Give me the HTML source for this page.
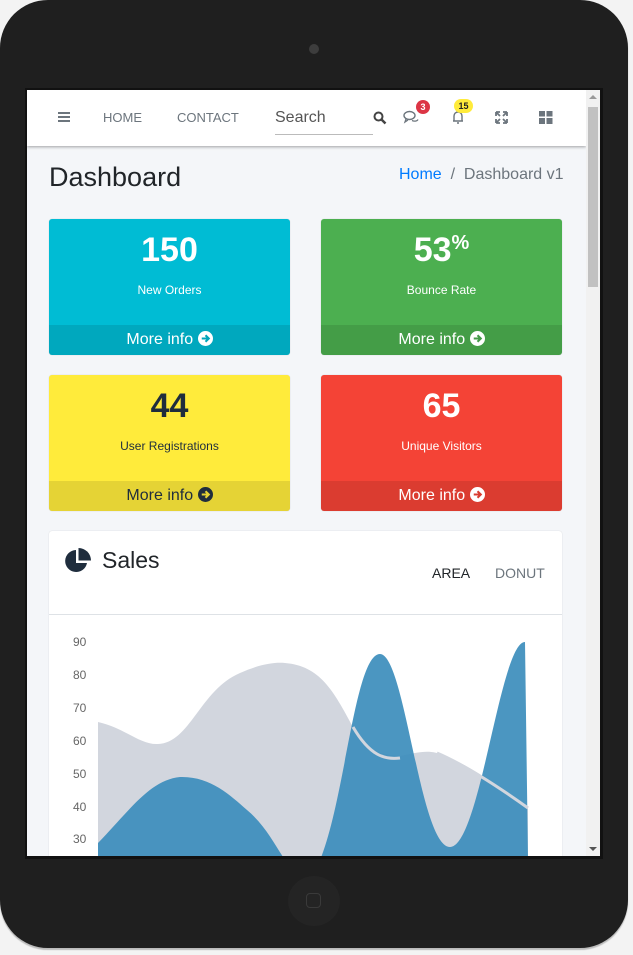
<!DOCTYPE html>
<html><head><meta charset="utf-8"><style>
*{margin:0;padding:0;box-sizing:border-box}
body{width:633px;height:955px;background:#f3f3f3;font-family:"Liberation Sans",Arial,sans-serif;position:relative;overflow:hidden}
.dev{position:absolute;left:0;top:0;width:628px;height:948px;background:#1f1f1f;border-radius:48px;box-shadow:0 2px 1px #bbb}
.cam{position:absolute;left:309px;top:44px;width:10px;height:10px;border-radius:50%;background:#3d3d3d}
.home{position:absolute;left:288px;top:876px;width:52px;height:50px;border-radius:50%;background:#242424}
.home i{position:absolute;left:18px;top:17px;width:15px;height:15px;border:1px solid #3a3a3a;border-radius:4px}
.scr{position:absolute;left:25px;top:88px;width:578px;height:771px;background:#111;padding:2px}
.in{position:relative;width:573px;height:766px;background:#f4f6f9;overflow:hidden}
.sb{position:absolute;right:0;top:0;width:14px;height:766px;background:#f1f1f1}
.th{position:absolute;left:2px;top:17px;width:10px;height:180px;background:#c1c1c1}
.nav{position:absolute;left:0;top:0;width:559px;height:56px;background:#fff;box-shadow:0 1px 3px rgba(0,0,0,.35)}
.t{position:absolute;color:#6c757d;font-size:14px}
.badge{position:absolute;font-size:9px;font-weight:bold;border-radius:8px;text-align:center;line-height:14px;height:14px}
.box{position:absolute;width:241px;height:136px;border-radius:3px;box-shadow:0 0 1px rgba(0,0,0,.2);overflow:hidden;text-align:center;color:#fff}
.box h3{font-size:34px;font-weight:bold;margin-top:12px;height:40px}
.box p{font-size:12px;margin-top:12px}
.box .f{position:absolute;left:0;bottom:0;width:100%;height:30px;background:rgba(0,0,0,.1);font-size:16px;line-height:30px}
.box .f svg{vertical-align:-2px}
.card{position:absolute;left:22px;top:441px;width:513px;height:340px;background:#fff;border-radius:3px;box-shadow:0 0 1px rgba(0,0,0,.2)}
.yl{position:absolute;left:24px;font-size:12px;color:#666}
</style></head><body>
<div class="dev"><div class="cam"></div><div class="home"><i></i></div></div>
<div class="scr"><div class="in">
<div class="nav">
 <div style="position:absolute;left:31px;top:22px;width:12px;height:2px;background:#6c757d;box-shadow:0 4px 0 #6c757d,0 8px 0 #6c757d"></div>
 <div class="t" style="left:76px;top:20px;font-size:13px">HOME</div>
 <div class="t" style="left:150px;top:20px;font-size:13px">CONTACT</div>
 <div class="t" style="left:248px;top:19px;font-size:16px;color:#555">Search</div>
 <div style="position:absolute;left:248px;top:44px;width:98px;height:1px;background:#bbb"></div>
 <svg style="position:absolute;left:346px;top:21px" width="14" height="14" viewBox="0 0 14 14"><circle cx="5.5" cy="5.5" r="4" fill="none" stroke="#444" stroke-width="2"/><path d="M8.5 8.5L12.5 12.5" stroke="#444" stroke-width="2.5"/></svg>
 <svg style="position:absolute;left:376px;top:20px" width="16" height="14" viewBox="0 0 16 14"><ellipse cx="6.5" cy="5.5" rx="5.5" ry="4" fill="none" stroke="#6c757d" stroke-width="1.4"/><path d="M9 10.5c2 1 5 1 6-1M3 9l-1 3 3-2" fill="none" stroke="#6c757d" stroke-width="1.3"/></svg>
 <div class="badge" style="left:389px;top:10px;width:14px;background:#dc3545;color:#fff">3</div>
 <svg style="position:absolute;left:424px;top:19px" width="14" height="16" viewBox="0 0 14 16"><path d="M2 12h10M3 12V7a4 4 0 0 1 8 0v5M6 14h2" fill="none" stroke="#6c757d" stroke-width="1.4"/></svg>
 <div class="badge" style="left:427px;top:9px;width:19px;background:#ffeb3b;color:#222">15</div>
 <svg style="position:absolute;left:468px;top:21px" width="13" height="13" viewBox="0 0 13 13"><path d="M1 1l4 4M12 1l-4 4M1 12l4-4M12 12l-4-4M1 1h4M1 1v4M12 1h-4M12 1v4M1 12h4M1 12v-4M12 12h-4M12 12v-4" stroke="#6c757d" stroke-width="1.8" fill="none"/></svg>
 <svg style="position:absolute;left:512px;top:21px" width="14" height="13" viewBox="0 0 14 13"><rect x="0" y="0" width="6" height="5.5" fill="#6c757d"/><rect x="7.5" y="0" width="6" height="5.5" fill="#6c757d"/><rect x="0" y="7" width="6" height="6" fill="#6c757d"/><rect x="7.5" y="7" width="6" height="6" fill="#6c757d"/></svg>
</div>
<div style="position:absolute;left:22px;top:72px;font-size:27px;color:#212529">Dashboard</div>
<div style="position:absolute;left:372px;top:76px;font-size:16px;color:#6c757d"><span style="color:#007bff">Home</span> &nbsp;/&nbsp; Dashboard v1</div>

<div class="box" style="left:22px;top:129px;background:#00bcd4"><h3>150</h3><p>New Orders</p><div class="f">More info <svg width="15" height="15" viewBox="0 0 16 16"><circle cx="8" cy="8" r="8" fill="#fff"/><path d="M4 8h7M8 4.5L11.5 8 8 11.5" stroke="#00a5ba" stroke-width="2.2" fill="none"/></svg></div></div>
<div class="box" style="left:294px;top:129px;background:#4caf50"><h3>53<sup style="font-size:20px;vertical-align:12px">%</sup></h3><p>Bounce Rate</p><div class="f">More info <svg width="15" height="15" viewBox="0 0 16 16"><circle cx="8" cy="8" r="8" fill="#fff"/><path d="M4 8h7M8 4.5L11.5 8 8 11.5" stroke="#449b48" stroke-width="2.2" fill="none"/></svg></div></div>
<div class="box" style="left:22px;top:285px;background:#ffeb3b;color:#1f2d3d"><h3>44</h3><p>User Registrations</p><div class="f">More info <svg width="15" height="15" viewBox="0 0 16 16"><circle cx="8" cy="8" r="8" fill="#1f2d3d"/><path d="M4 8h7M8 4.5L11.5 8 8 11.5" stroke="#e5d335" stroke-width="2.2" fill="none"/></svg></div></div>
<div class="box" style="left:294px;top:285px;background:#f44336"><h3>65</h3><p>Unique Visitors</p><div class="f">More info <svg width="15" height="15" viewBox="0 0 16 16"><circle cx="8" cy="8" r="8" fill="#fff"/><path d="M4 8h7M8 4.5L11.5 8 8 11.5" stroke="#d93c30" stroke-width="2.2" fill="none"/></svg></div></div>

<div class="card">
 <svg style="position:absolute;left:16px;top:17px" width="26" height="26" viewBox="0 0 26 26"><path d="M11 2a11 11 0 1 0 11 13H11z" fill="#1f2d3d"/><path d="M13.5 0v12.5H26A12.5 12.5 0 0 0 13.5 0z" fill="#1f2d3d"/></svg>
 <div style="position:absolute;left:53px;top:16px;font-size:23px;color:#212529">Sales</div>
 <div style="position:absolute;left:383px;top:34px;font-size:14px;color:#212529">AREA</div>
 <div style="position:absolute;left:446px;top:34px;font-size:14px;color:#6c757d">DONUT</div>
 <div style="position:absolute;left:0;top:83px;width:100%;height:1px;background:#dee2e6"></div>
 <div class="yl" style="top:104px">90</div><div class="yl" style="top:137px">80</div><div class="yl" style="top:170px">70</div><div class="yl" style="top:203px">60</div><div class="yl" style="top:236px">50</div><div class="yl" style="top:269px">40</div><div class="yl" style="top:301px">30</div>
</div>
<svg style="position:absolute;left:0;top:0" width="559" height="766" viewBox="27 90 559 766">
 <path d="M98 722C125 728 140 745 158 744C190 743 200 690 240 673C260 664 275 662 285 663C320 666 333 690 353 727C370 756 385 754 400 756C420 752 430 749 445 756C480 770 500 790 528 808V860H98Z" fill="#d2d6de"/>
 <path d="M98 843C130 810 150 780 180 777C210 776 230 795 247 810C265 825 275 845 285 860L320 860C345 800 355 654 380 654C405 654 420 847 450 847C480 847 500 642 525 642L528 860H98Z" fill="#3c8dbc" fill-opacity=".92"/>
 <path d="M353 727C370 756 385 760 400 758M437 753C465 765 500 788 528 808" fill="none" stroke="#d2d6de" stroke-width="3"/>
</svg>
<div class="sb"><div class="th"></div>
 <div style="position:absolute;left:3px;top:5px;border:4px solid transparent;border-bottom:4px solid #999;border-top:0"></div>
 <div style="position:absolute;left:3px;top:757px;border:4px solid transparent;border-top:4px solid #555;border-bottom:0"></div>
</div>
</div></div>
</body></html>
